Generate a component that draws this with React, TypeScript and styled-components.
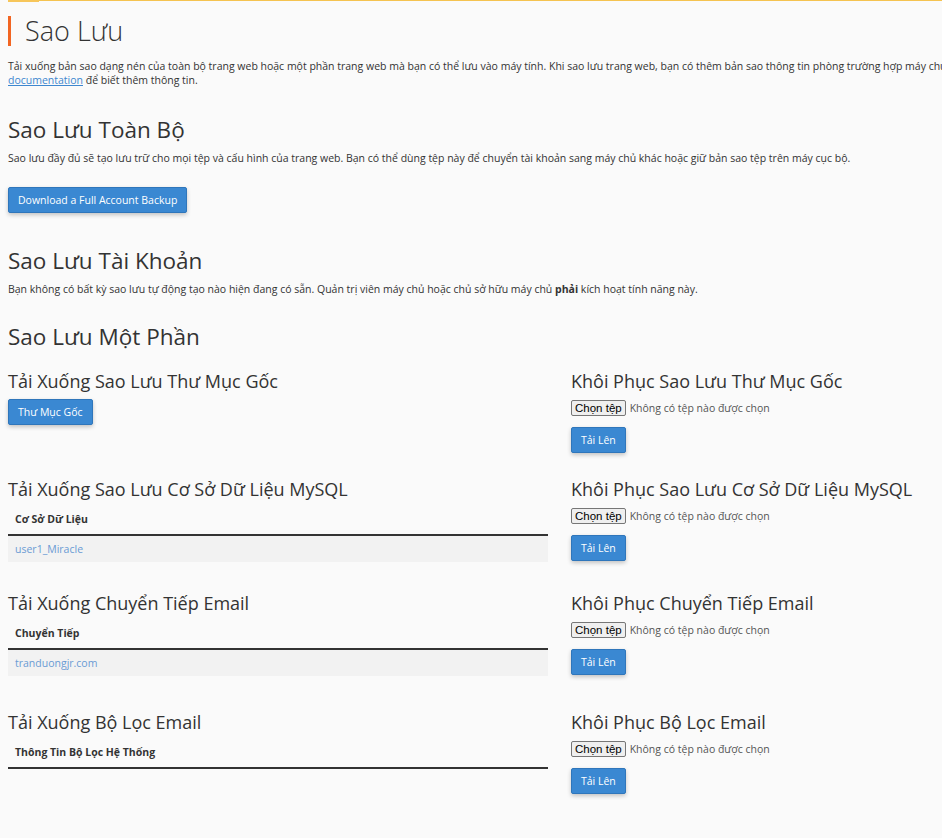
import React from "react";
import styled, { createGlobalStyle } from "styled-components";

const GlobalStyle = createGlobalStyle`
  html, body {
    margin: 0;
    padding: 0;
    background: #fafafa;
    overflow-x: hidden;
  }
  body {
    font-family: "Open Sans", "Liberation Sans", sans-serif;
    font-size: 10.5px;
    color: #333;
  }
`;

const Page = styled.div`
  width: 1103px;
  padding: 0 8px 40px;
`;

const TopLine = styled.div`
  display: flex;
  align-items: flex-start;
  height: 2px;
`;

const TopAccent = styled.div`
  width: 31px;
  height: 2px;
  background: #f7c65a;
`;

const TopRule = styled.div`
  flex: 1;
  height: 1px;
  background: #f5c350;
`;

const Title = styled.h1`
  margin: 14px 0 0;
  height: 30px;
  line-height: 30px;
  border-left: 3px solid #f26522;
  padding-left: 14px;
  font-size: 27px;
  font-weight: 300;
  color: #333;
`;

const Intro = styled.p`
  margin: 13px 0 0;
  line-height: 14px;
  font-size: 10.5px;
`;

const NoWrap = styled.span`
  white-space: nowrap;
`;

const DocLink = styled.a`
  color: #3e87cf;
  text-decoration: underline;
`;

const H2 = styled.h2<{ $top: number }>`
  margin: ${(p) => p.$top}px 0 0;
  font-size: 22.5px;
  font-weight: 400;
  line-height: 30px;
  color: #333;
`;

const Desc = styled.p`
  margin: 5px 0 0;
  font-size: 10.5px;
  line-height: 16px;
`;

const Button = styled.button<{ $top: number }>`
  display: inline-block;
  margin-top: ${(p) => p.$top}px;
  height: 26px;
  padding: 0 9px;
  background: #3a88d2;
  border: 1px solid #2f76bb;
  border-radius: 2px;
  color: #fff;
  font-family: "Open Sans", "Liberation Sans", sans-serif;
  font-size: 10.5px;
  line-height: 24px;
  box-shadow: 0 2px 4px rgba(0, 0, 0, 0.22);
  cursor: pointer;
`;

const Row = styled.div<{ $bottom: number }>`
  display: grid;
  grid-template-columns: 540px 540px;
  column-gap: 23px;
  align-items: start;
  margin-bottom: ${(p) => p.$bottom}px;
`;

const Cell = styled.div`
  display: flex;
  flex-direction: column;
  align-items: flex-start;
`;

const H3 = styled.h3`
  margin: 0;
  font-size: 18px;
  font-weight: 400;
  line-height: 22px;
  color: #333;
`;

const Table = styled.table`
  width: 100%;
  border-collapse: collapse;
  margin-top: 2px;
`;

const Th = styled.th`
  text-align: left;
  font-size: 10.5px;
  font-weight: 700;
  padding: 8px 7px 6px;
  line-height: 18px;
  border-bottom: 2px solid #333;
`;

const Td = styled.td`
  background: #f2f2f2;
  padding: 4px 7px;
  line-height: 18px;
  font-size: 10.5px;
`;

const RowLink = styled.a`
  color: #6a9bd4;
  text-decoration: none;
`;

const FileRow = styled.div`
  display: flex;
  align-items: center;
  margin-top: 8px;
  height: 16px;
`;

const FileButton = styled.span`
  display: inline-flex;
  align-items: center;
  height: 16px;
  box-sizing: border-box;
  padding: 0 3px;
  border: 1px solid #767676;
  border-radius: 2px;
  background: #efefef;
  color: #000;
  font-family: "Liberation Sans", Arial, sans-serif;
  font-size: 11.5px;
`;

const FileName = styled.span`
  margin-left: 4px;
  font-size: 10.5px;
  color: #555;
`;

const Spacer = styled.div<{ $h: number }>`
  height: ${(p) => p.$h}px;
`;

type Restore = { title: string };

const FileUpload: React.FC<Restore> = ({ title }) => (
  <Cell>
    <H3>{title}</H3>
    <FileRow>
      <FileButton>Chọn tệp</FileButton>
      <FileName>Không có tệp nào được chọn</FileName>
    </FileRow>
    <Button $top={11}>Tải Lên</Button>
  </Cell>
);

const DataTable: React.FC<{ title: string; head: string; value?: string }> = ({
  title,
  head,
  value,
}) => (
  <Cell>
    <H3>{title}</H3>
    <Table>
      <thead>
        <tr>
          <Th>{head}</Th>
        </tr>
      </thead>
      {value && (
        <tbody>
          <tr>
            <Td>
              <RowLink href="#">{value}</RowLink>
            </Td>
          </tr>
        </tbody>
      )}
    </Table>
  </Cell>
);

export default function App() {
  return (
    <>
      <GlobalStyle />
      <Page>
        <TopLine>
          <TopAccent />
          <TopRule />
        </TopLine>
        <Title>Sao Lưu</Title>
        <Intro>
          <NoWrap>
            Tải xuống bản sao dạng nén của toàn bộ trang web hoặc một phần trang web mà bạn có thể lưu vào máy tính. Khi sao lưu trang web, bạn có thêm bản sao thông tin phòng trường hợp máy chủ gặp sự cố. Đọc
          </NoWrap>
          <br />
          <DocLink href="#">documentation</DocLink> để biết thêm thông tin.
        </Intro>

        <H2 $top={28}>Sao Lưu Toàn Bộ</H2>
        <Desc>
          Sao lưu đầy đủ sẽ tạo lưu trữ cho mọi tệp và cấu hình của trang web. Bạn có thể dùng tệp này để chuyển tài khoản sang máy chủ khác hoặc giữ bản sao tệp trên máy cục bộ.
        </Desc>
        <Button $top={21}>Download a Full Account Backup</Button>

        <H2 $top={33}>Sao Lưu Tài Khoản</H2>
        <Desc>
          Bạn không có bất kỳ sao lưu tự động tạo nào hiện đang có sẵn. Quản trị viên máy chủ hoặc chủ sở hữu máy chủ <b>phải</b> kích hoạt tính năng này.
        </Desc>

        <H2 $top={25}>Sao Lưu Một Phần</H2>
        <Spacer $h={18} />

        <Row $bottom={25}>
          <Cell>
            <H3>Tải Xuống Sao Lưu Thư Mục Gốc</H3>
            <Button $top={7}>Thư Mục Gốc</Button>
          </Cell>
          <FileUpload title="Khôi Phục Sao Lưu Thư Mục Gốc" />
        </Row>

        <Row $bottom={30}>
          <DataTable title="Tải Xuống Sao Lưu Cơ Sở Dữ Liệu MySQL" head="Cơ Sở Dữ Liệu" value="user1_Miracle" />
          <FileUpload title="Khôi Phục Sao Lưu Cơ Sở Dữ Liệu MySQL" />
        </Row>

        <Row $bottom={35}>
          <DataTable title="Tải Xuống Chuyển Tiếp Email" head="Chuyển Tiếp" value="tranduongjr.com" />
          <FileUpload title="Khôi Phục Chuyển Tiếp Email" />
        </Row>

        <Row $bottom={0}>
          <DataTable title="Tải Xuống Bộ Lọc Email" head="Thông Tin Bộ Lọc Hệ Thống" />
          <FileUpload title="Khôi Phục Bộ Lọc Email" />
        </Row>
      </Page>
    </>
  );
}
